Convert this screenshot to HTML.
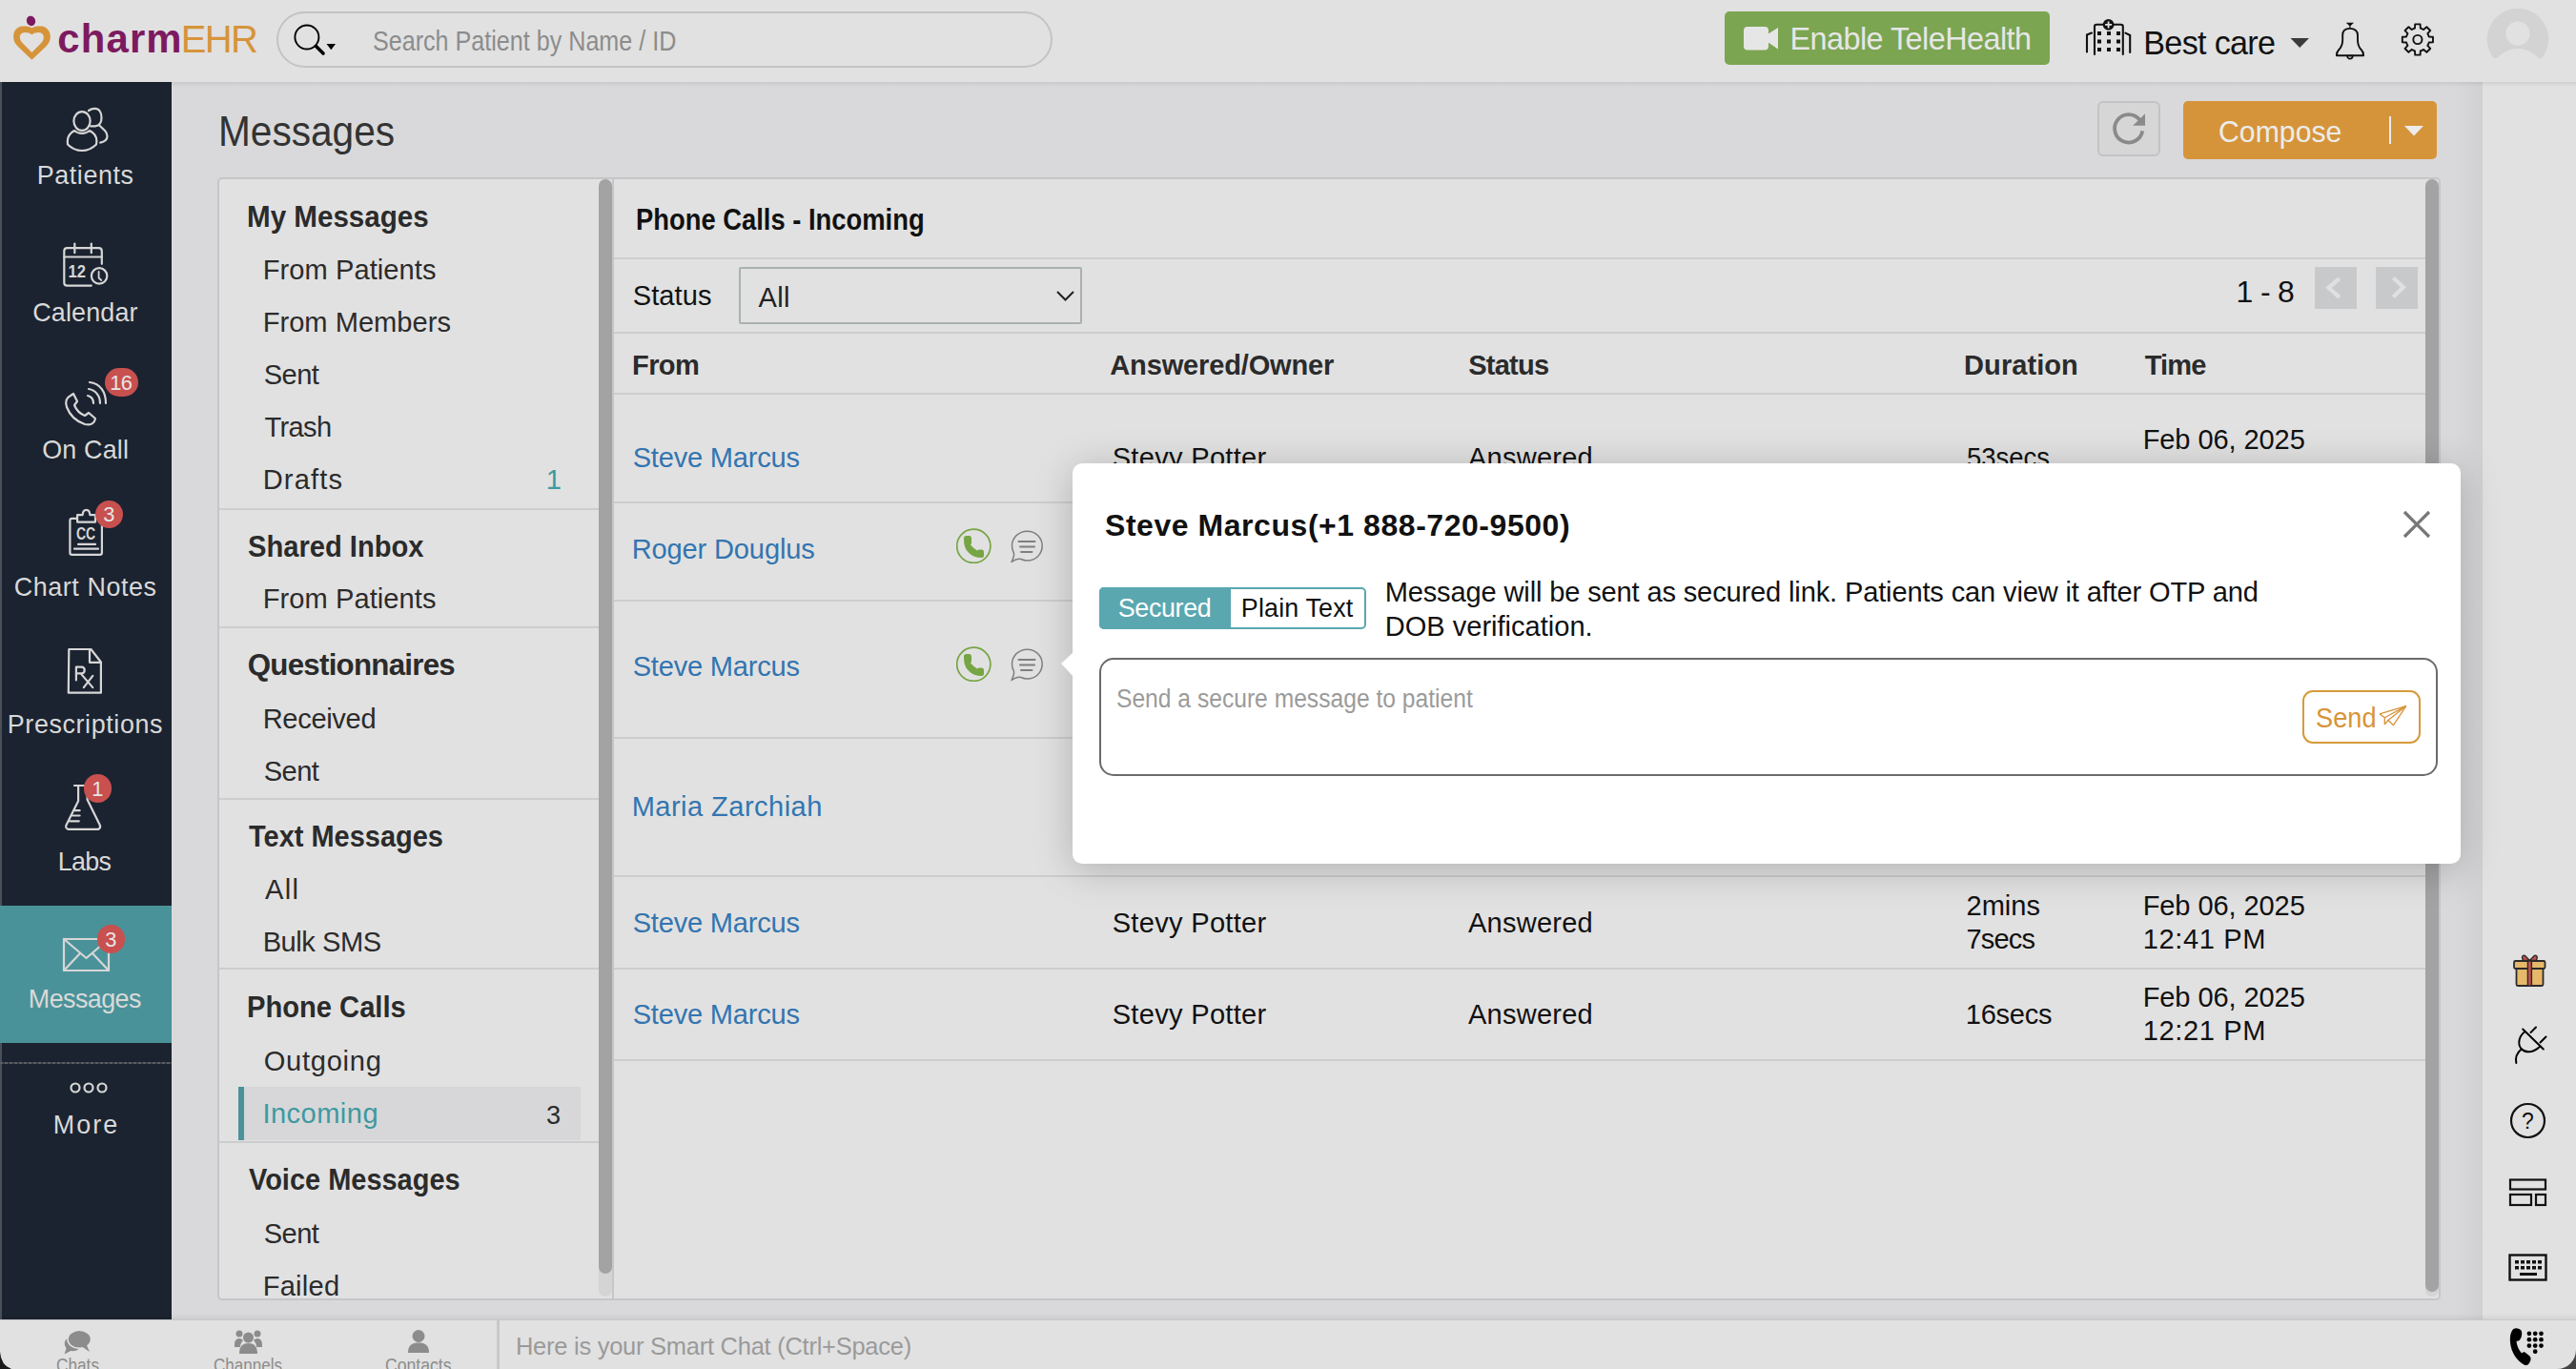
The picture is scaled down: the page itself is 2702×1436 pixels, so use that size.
<!DOCTYPE html><html><head><meta charset="utf-8"><style>
html,body{margin:0;padding:0;}
body{width:2702px;height:1436px;overflow:hidden;position:relative;background:#d9d9db;font-family:"Liberation Sans", sans-serif;}
</style></head><body>

<div style="position:absolute;left:0px;top:0px;width:2702px;height:86px;background:#e1e1e1;"></div>
<div style="position:absolute;left:0px;top:86px;width:180px;height:1298px;background:#1b2330;"></div>
<div style="position:absolute;left:0px;top:86px;width:2px;height:1298px;background:#4b5058;"></div>
<div style="position:absolute;left:0px;top:950px;width:180px;height:144px;background:#4a9299;"></div>
<div style="position:absolute;left:0px;top:1114px;width:180px;height:2px;background:repeating-linear-gradient(90deg,#5a5e64 0 3px,#3a3e45 3px 5px);"></div>
<div style="position:absolute;left:2573px;top:86px;width:31px;height:1298px;background:linear-gradient(90deg,rgba(0,0,0,0),rgba(0,0,0,0.04));"></div>
<div style="position:absolute;left:2604px;top:86px;width:98px;height:1298px;background:#e1e1e1;"></div>
<div style="position:absolute;left:0px;top:86px;width:2702px;height:5px;background:linear-gradient(rgba(0,0,0,0.075),rgba(0,0,0,0));"></div>
<div style="position:absolute;left:228px;top:186px;width:2332px;height:1178px;background:#e1e1e1;border:2px solid #c5c6c8;border-radius:5px;box-sizing:border-box;"></div>
<div style="position:absolute;left:642px;top:187px;width:2px;height:1176px;background:#c5c6c8;"></div>
<div style="position:absolute;left:628px;top:188px;width:14px;height:1172px;background:#d4d4d4;border-radius:7px;"></div>
<div style="position:absolute;left:628px;top:188px;width:14px;height:1148px;background:#a3a3a3;border-radius:7px;"></div>
<div style="position:absolute;left:2544px;top:188px;width:14px;height:1172px;background:#d4d4d4;border-radius:7px;"></div>
<div style="position:absolute;left:2544px;top:188px;width:14px;height:1167px;background:#a3a3a3;border-radius:7px;"></div>
<div id="t0" style="position:absolute;left:228.76px;top:114.50px;font-size:45.06px;line-height:45.06px;font-weight:400;color:#333333;white-space:nowrap;letter-spacing:0.000px;transform:scaleX(0.9015);transform-origin:0 0;">Messages</div>
<div style="position:absolute;left:230px;top:533px;width:398px;height:2px;background:#cdcdcd;"></div>
<div style="position:absolute;left:230px;top:657px;width:398px;height:2px;background:#cdcdcd;"></div>
<div style="position:absolute;left:230px;top:837px;width:398px;height:2px;background:#cdcdcd;"></div>
<div style="position:absolute;left:230px;top:1015px;width:398px;height:2px;background:#cdcdcd;"></div>
<div style="position:absolute;left:230px;top:1197px;width:398px;height:2px;background:#cdcdcd;"></div>
<div id="t1" style="position:absolute;left:259.08px;top:212.24px;font-size:31.25px;line-height:31.25px;font-weight:700;color:#2b2b2b;white-space:nowrap;letter-spacing:0.000px;transform:scaleX(0.9464);transform-origin:0 0;">My Messages</div>
<div id="t2" style="position:absolute;left:260.12px;top:557.74px;font-size:31.25px;line-height:31.25px;font-weight:700;color:#2b2b2b;white-space:nowrap;letter-spacing:0.000px;transform:scaleX(0.9321);transform-origin:0 0;">Shared Inbox</div>
<div id="t3" style="position:absolute;left:259.75px;top:682.24px;font-size:31.25px;line-height:31.25px;font-weight:700;color:#2b2b2b;white-space:nowrap;letter-spacing:-0.731px;">Questionnaires</div>
<div id="t4" style="position:absolute;left:260.71px;top:862.49px;font-size:31.25px;line-height:31.25px;font-weight:700;color:#2b2b2b;white-space:nowrap;letter-spacing:0.000px;transform:scaleX(0.9270);transform-origin:0 0;">Text Messages</div>
<div id="t5" style="position:absolute;left:259.11px;top:1041.24px;font-size:31.25px;line-height:31.25px;font-weight:700;color:#2b2b2b;white-space:nowrap;letter-spacing:0.000px;transform:scaleX(0.9323);transform-origin:0 0;">Phone Calls</div>
<div id="t6" style="position:absolute;left:260.85px;top:1221.74px;font-size:31.25px;line-height:31.25px;font-weight:700;color:#2b2b2b;white-space:nowrap;letter-spacing:0.000px;transform:scaleX(0.9268);transform-origin:0 0;">Voice Messages</div>
<div style="position:absolute;left:250px;top:1140px;width:359px;height:56px;background:#d7d7d9;"></div>
<div style="position:absolute;left:250px;top:1140px;width:6px;height:56px;background:#4a9299;"></div>
<div id="t7" style="position:absolute;left:275.67px;top:269.09px;font-size:29.07px;line-height:29.07px;font-weight:400;color:#2b2b2b;white-space:nowrap;letter-spacing:0.078px;">From Patients</div>
<div id="t8" style="position:absolute;left:275.67px;top:324.09px;font-size:29.07px;line-height:29.07px;font-weight:400;color:#2b2b2b;white-space:nowrap;letter-spacing:0.027px;">From Members</div>
<div id="t9" style="position:absolute;left:276.69px;top:379.09px;font-size:29.07px;line-height:29.07px;font-weight:400;color:#2b2b2b;white-space:nowrap;letter-spacing:-0.510px;">Sent</div>
<div id="t10" style="position:absolute;left:277.42px;top:434.09px;font-size:29.07px;line-height:29.07px;font-weight:400;color:#2b2b2b;white-space:nowrap;letter-spacing:-0.631px;">Trash</div>
<div id="t11" style="position:absolute;left:275.67px;top:489.09px;font-size:29.07px;line-height:29.07px;font-weight:400;color:#2b2b2b;white-space:nowrap;letter-spacing:1.177px;">Drafts</div>
<div id="t12" style="position:absolute;left:275.67px;top:614.09px;font-size:29.07px;line-height:29.07px;font-weight:400;color:#2b2b2b;white-space:nowrap;letter-spacing:0.078px;">From Patients</div>
<div id="t13" style="position:absolute;left:275.67px;top:740.09px;font-size:29.07px;line-height:29.07px;font-weight:400;color:#2b2b2b;white-space:nowrap;letter-spacing:-0.319px;">Received</div>
<div id="t14" style="position:absolute;left:276.69px;top:795.09px;font-size:29.07px;line-height:29.07px;font-weight:400;color:#2b2b2b;white-space:nowrap;letter-spacing:-0.510px;">Sent</div>
<div id="t15" style="position:absolute;left:278.0px;top:919.34px;font-size:29.07px;line-height:29.07px;font-weight:400;color:#2b2b2b;white-space:nowrap;letter-spacing:1.309px;">All</div>
<div id="t16" style="position:absolute;left:275.67px;top:973.84px;font-size:29.07px;line-height:29.07px;font-weight:400;color:#2b2b2b;white-space:nowrap;letter-spacing:-0.457px;">Bulk SMS</div>
<div id="t17" style="position:absolute;left:276.69px;top:1099.34px;font-size:29.07px;line-height:29.07px;font-weight:400;color:#2b2b2b;white-space:nowrap;letter-spacing:0.744px;">Outgoing</div>
<div id="t18" style="position:absolute;left:276.69px;top:1280.09px;font-size:29.07px;line-height:29.07px;font-weight:400;color:#2b2b2b;white-space:nowrap;letter-spacing:-0.510px;">Sent</div>
<div id="t19" style="position:absolute;left:275.67px;top:1335.09px;font-size:29.07px;line-height:29.07px;font-weight:400;color:#2b2b2b;white-space:nowrap;letter-spacing:0.255px;">Failed</div>
<div id="t20" style="position:absolute;left:275.38px;top:1154.09px;font-size:29.07px;line-height:29.07px;font-weight:400;color:#3e99a0;white-space:nowrap;letter-spacing:0.464px;">Incoming</div>
<div id="t21" style="position:absolute;left:572.82px;top:489.09px;font-size:29.07px;line-height:29.07px;font-weight:400;color:#3e99a0;white-space:nowrap;letter-spacing:0.000px;">1</div>
<div id="t22" style="position:absolute;left:572.91px;top:1155.70px;font-size:27.18px;line-height:27.18px;font-weight:400;color:#2b2b2b;white-space:nowrap;letter-spacing:0.000px;">3</div>
<div id="t23" style="position:absolute;left:667.22px;top:214.86px;font-size:30.52px;line-height:30.52px;font-weight:700;color:#111111;white-space:nowrap;letter-spacing:0.000px;transform:scaleX(0.8969);transform-origin:0 0;">Phone Calls - Incoming</div>
<div style="position:absolute;left:644px;top:270px;width:1900px;height:2px;background:#cdcdcd;"></div>
<div id="t24" style="position:absolute;left:663.69px;top:296.09px;font-size:29.07px;line-height:29.07px;font-weight:400;color:#111111;white-space:nowrap;letter-spacing:0.084px;">Status</div>
<div style="position:absolute;left:775px;top:280px;width:360px;height:60px;border:2px solid #aab1b1;border-radius:2px;box-sizing:border-box;"></div>
<div id="t25" style="position:absolute;left:795.5px;top:298.09px;font-size:29.07px;line-height:29.07px;font-weight:400;color:#222;white-space:nowrap;letter-spacing:0.309px;">All</div>
<svg style="position:absolute;left:1107px;top:304px;" width="21" height="14" viewBox="0 0 21 14"><polyline points="2,2 10.5,10.5 19,2" fill="none" stroke="#222" stroke-width="2"/></svg>
<div style="position:absolute;left:644px;top:348px;width:1900px;height:2px;background:#cdcdcd;"></div>
<div id="t26" style="position:absolute;left:2345.6px;top:289.62px;font-size:31.98px;line-height:31.98px;font-weight:400;color:#111111;white-space:nowrap;letter-spacing:-0.690px;">1 - 8</div>
<div style="position:absolute;left:2428px;top:280px;width:44px;height:44px;background:#c8c9ca;"></div>
<div style="position:absolute;left:2492px;top:280px;width:44px;height:44px;background:#c8c9ca;"></div>
<svg style="position:absolute;left:2428px;top:280px;" width="44" height="44" viewBox="0 0 44 44"><polyline points="25.9,12.2 14.5,21.8 25.9,31.9" fill="none" stroke="#e0e0e0" stroke-width="4.3"/></svg>
<svg style="position:absolute;left:2492px;top:280px;" width="44" height="44" viewBox="0 0 44 44"><polyline points="18.3,11.5 29,21.2 18.3,31.5" fill="none" stroke="#e0e0e0" stroke-width="4.3"/></svg>
<div id="t27" style="position:absolute;left:663.11px;top:368.59px;font-size:29.07px;line-height:29.07px;font-weight:700;color:#2b2b2b;white-space:nowrap;letter-spacing:-0.674px;">From</div>
<div id="t28" style="position:absolute;left:1164.27px;top:368.59px;font-size:29.07px;line-height:29.07px;font-weight:700;color:#2b2b2b;white-space:nowrap;letter-spacing:-0.176px;">Answered/Owner</div>
<div id="t29" style="position:absolute;left:1540.13px;top:368.59px;font-size:29.07px;line-height:29.07px;font-weight:700;color:#2b2b2b;white-space:nowrap;letter-spacing:-0.751px;">Status</div>
<div id="t30" style="position:absolute;left:2060.11px;top:368.59px;font-size:29.07px;line-height:29.07px;font-weight:700;color:#2b2b2b;white-space:nowrap;letter-spacing:0.025px;">Duration</div>
<div id="t31" style="position:absolute;left:2249.71px;top:368.59px;font-size:29.07px;line-height:29.07px;font-weight:700;color:#2b2b2b;white-space:nowrap;letter-spacing:-0.826px;">Time</div>
<div style="position:absolute;left:644px;top:412px;width:1900px;height:2px;background:#cdcdcd;"></div>
<div style="position:absolute;left:644px;top:526px;width:1900px;height:2px;background:#cdcdcd;"></div>
<div style="position:absolute;left:644px;top:629px;width:1900px;height:2px;background:#cdcdcd;"></div>
<div style="position:absolute;left:644px;top:773px;width:1900px;height:2px;background:#cdcdcd;"></div>
<div style="position:absolute;left:644px;top:918px;width:1900px;height:2px;background:#cdcdcd;"></div>
<div style="position:absolute;left:644px;top:1015px;width:1900px;height:2px;background:#cdcdcd;"></div>
<div style="position:absolute;left:644px;top:1111px;width:1900px;height:2px;background:#cdcdcd;"></div>
<div id="t32" style="position:absolute;left:663.69px;top:466.09px;font-size:29.07px;line-height:29.07px;font-weight:400;color:#3375b0;white-space:nowrap;letter-spacing:-0.217px;">Steve Marcus</div>
<div id="t33" style="position:absolute;left:1166.69px;top:466.09px;font-size:29.07px;line-height:29.07px;font-weight:400;color:#111111;white-space:nowrap;letter-spacing:0.294px;">Stevy Potter</div>
<div id="t34" style="position:absolute;left:1540.0px;top:466.09px;font-size:29.07px;line-height:29.07px;font-weight:400;color:#111111;white-space:nowrap;letter-spacing:0.207px;">Answered</div>
<div id="t35" style="position:absolute;left:2062.9px;top:466.09px;font-size:29.07px;line-height:29.07px;font-weight:400;color:#111111;white-space:nowrap;letter-spacing:0.000px;transform:scaleX(0.9449);transform-origin:0 0;">53secs</div>
<div id="t36" style="position:absolute;left:2247.67px;top:447.09px;font-size:29.07px;line-height:29.07px;font-weight:400;color:#111111;white-space:nowrap;letter-spacing:-0.100px;">Feb 06, 2025</div>
<div id="t37" style="position:absolute;left:662.67px;top:562.09px;font-size:29.07px;line-height:29.07px;font-weight:400;color:#3375b0;white-space:nowrap;letter-spacing:-0.146px;">Roger Douglus</div>
<div id="t38" style="position:absolute;left:663.69px;top:685.34px;font-size:29.07px;line-height:29.07px;font-weight:400;color:#3375b0;white-space:nowrap;letter-spacing:-0.217px;">Steve Marcus</div>
<div id="t39" style="position:absolute;left:662.67px;top:832.34px;font-size:29.07px;line-height:29.07px;font-weight:400;color:#3375b0;white-space:nowrap;letter-spacing:0.451px;">Maria Zarchiah</div>
<div id="t40" style="position:absolute;left:663.69px;top:953.59px;font-size:29.07px;line-height:29.07px;font-weight:400;color:#3375b0;white-space:nowrap;letter-spacing:-0.217px;">Steve Marcus</div>
<div id="t41" style="position:absolute;left:1166.69px;top:954.09px;font-size:29.07px;line-height:29.07px;font-weight:400;color:#111111;white-space:nowrap;letter-spacing:0.294px;">Stevy Potter</div>
<div id="t42" style="position:absolute;left:1540.0px;top:954.09px;font-size:29.07px;line-height:29.07px;font-weight:400;color:#111111;white-space:nowrap;letter-spacing:0.207px;">Answered</div>
<div id="t43" style="position:absolute;left:2062.55px;top:935.59px;font-size:29.07px;line-height:29.07px;font-weight:400;color:#111111;white-space:nowrap;letter-spacing:-0.033px;">2mins</div>
<div id="t44" style="position:absolute;left:2062.55px;top:970.59px;font-size:29.07px;line-height:29.07px;font-weight:400;color:#111111;white-space:nowrap;letter-spacing:-0.846px;">7secs</div>
<div id="t45" style="position:absolute;left:2247.67px;top:935.59px;font-size:29.07px;line-height:29.07px;font-weight:400;color:#111111;white-space:nowrap;letter-spacing:-0.100px;">Feb 06, 2025</div>
<div id="t46" style="position:absolute;left:2247.82px;top:970.59px;font-size:29.07px;line-height:29.07px;font-weight:400;color:#111111;white-space:nowrap;letter-spacing:0.608px;">12:41 PM</div>
<div id="t47" style="position:absolute;left:663.69px;top:1049.84px;font-size:29.07px;line-height:29.07px;font-weight:400;color:#3375b0;white-space:nowrap;letter-spacing:-0.217px;">Steve Marcus</div>
<div id="t48" style="position:absolute;left:1166.69px;top:1050.09px;font-size:29.07px;line-height:29.07px;font-weight:400;color:#111111;white-space:nowrap;letter-spacing:0.294px;">Stevy Potter</div>
<div id="t49" style="position:absolute;left:1540.0px;top:1050.09px;font-size:29.07px;line-height:29.07px;font-weight:400;color:#111111;white-space:nowrap;letter-spacing:0.207px;">Answered</div>
<div id="t50" style="position:absolute;left:2061.82px;top:1050.09px;font-size:29.07px;line-height:29.07px;font-weight:400;color:#111111;white-space:nowrap;letter-spacing:-0.288px;">16secs</div>
<div id="t51" style="position:absolute;left:2247.67px;top:1032.09px;font-size:29.07px;line-height:29.07px;font-weight:400;color:#111111;white-space:nowrap;letter-spacing:-0.100px;">Feb 06, 2025</div>
<div id="t52" style="position:absolute;left:2247.82px;top:1067.09px;font-size:29.07px;line-height:29.07px;font-weight:400;color:#111111;white-space:nowrap;letter-spacing:0.608px;">12:21 PM</div>
<svg style="position:absolute;left:50px;top:100px;" width="80" height="70" viewBox="50 100 80 70"><g fill="none" stroke="#d6d6d6" stroke-width="2.2" stroke-linecap="round" stroke-linejoin="round"><path d="M93,116 C95,114.5 97.5,113.8 99.5,113.8 C104,113.8 106.5,118 106.5,123.5 C106.5,128.5 104,131.8 100,132.3 L95,132.3"/><path d="M104.2,131.5 L110,137 C112,139 112.5,141 112.5,143 C112.5,146 110,148.5 105.2,149.6"/><ellipse cx="86" cy="127" rx="8.6" ry="9.9" fill="#1b2330"/><path d="M78,137 C73.5,139.5 70.8,143.5 70.8,148 L71,151.5 C75,155.5 80,158 86,158 C92,158 97,155.5 101,151.5 L101.4,148 C101.4,143.5 99,139.5 94,137 C92,138.8 89,139.8 86,139.8 C83,139.8 80,138.8 78,137 Z" fill="#1b2330"/></g></svg>
<svg style="position:absolute;left:55px;top:245px;" width="70" height="65" viewBox="55 245 70 65"><g fill="none" stroke="#d6d6d6" stroke-width="2.2" stroke-linecap="round" stroke-linejoin="round"><path d="M95.8,299.6 H70.5 Q67.3,299.6 67.3,296.4 V263.4 Q67.3,260.2 70.5,260.2 H103.6 Q106.8,260.2 106.8,263.4 V276.8"/><line x1="67.3" y1="269.5" x2="106.8" y2="269.5"/><line x1="78.3" y1="255.6" x2="78.3" y2="265.2"/><line x1="95.8" y1="255.6" x2="95.8" y2="265.2"/><circle cx="104.1" cy="289.4" r="8.2"/><path d="M103.6,285 V291.5 L106.3,294" stroke-width="1.8"/></g><text x="71.5" y="290.8" font-family="Liberation Sans" font-size="17.5" font-weight="bold" fill="#d6d6d6" textLength="18.5" lengthAdjust="spacingAndGlyphs">12</text></svg>
<svg style="position:absolute;left:60px;top:395px;" width="60" height="55" viewBox="0 0 60 55"><g fill="none" stroke="#d6d6d6" stroke-width="2.2" stroke-linecap="round" stroke-linejoin="round"><path d="M14,20 C10,22 8,26 10,32 C13,40 20,47 29,50 C33,51 37,50 39,47 L40,44 L33,38 L29,41 C24,39 20,35 18,30 L21,26 L17,18 Z"/><path d="M32,20 C36,21 38,24 38,28"/><path d="M33,13 C40,14 45,20 45,28"/><path d="M34,6 C45,7 51,16 51,28"/></g></svg>
<svg style="position:absolute;left:55px;top:520px;" width="80" height="70" viewBox="55 520 80 70"><g fill="none" stroke="#d6d6d6" stroke-width="2.2" stroke-linecap="round" stroke-linejoin="round"><path d="M81.1,543.8 H75.6 Q73.4,543.8 73.4,546 V579.7 Q73.4,581.9 75.6,581.9 H104.7 Q106.9,581.9 106.9,579.7 V546 Q106.9,543.8 104.7,543.8 H100"/><path d="M81.1,547.6 V540.2 H86.6 Q87,534.8 90.5,534.8 Q94,534.8 94.4,540.2 H100 V547.6 Z"/><line x1="82.1" y1="570.9" x2="100" y2="570.9"/><line x1="78" y1="575.7" x2="103" y2="575.7"/></g><text x="80" y="565.8" font-family="Liberation Sans" font-size="18.5" font-weight="bold" fill="#d6d6d6" textLength="20.2" lengthAdjust="spacingAndGlyphs">CC</text></svg>
<svg style="position:absolute;left:55px;top:670px;" width="80" height="70" viewBox="55 670 80 70"><g fill="none" stroke="#d6d6d6" stroke-width="2.2" stroke-linecap="round" stroke-linejoin="round"><path d="M72.3,681 H95.4 L105.9,694.5 V726.7 H71.8 Z"/><path d="M94,681.5 V694.8 H105.5"/><path d="M79.9,713.5 V699.7 H85.3 Q88.7,699.7 88.7,703.1 Q88.7,706.4 85.3,706.4 H79.9 M84.8,706.6 L97.3,721.1 M87.8,721.1 L97.3,708.9"/></g></svg>
<svg style="position:absolute;left:55px;top:805px;" width="80" height="70" viewBox="55 805 80 70"><g fill="none" stroke="#d6d6d6" stroke-width="2.2" stroke-linecap="round" stroke-linejoin="round"><path d="M78,824 H91.6"/><path d="M82.1,824 V840.3 L69.5,865.5 Q68.2,868.5 71.5,869.9 H103 Q106,868.5 104.8,865.5 L91.6,838.7 V824"/><line x1="78.6" y1="850.2" x2="83.6" y2="850.2"/><line x1="76" y1="855.5" x2="83.6" y2="855.5"/><line x1="73" y1="861.3" x2="82.8" y2="861.3"/></g></svg>
<svg style="position:absolute;left:60px;top:978px;" width="60" height="47" viewBox="0 0 60 47"><g fill="none" stroke="#d6d6d6" stroke-width="2.2" stroke-linecap="round" stroke-linejoin="round"><rect x="7" y="7" width="47" height="33"/><path d="M7,7 L30.5,27 L54,7 M7,40 L24,22 M54,40 L37,22"/></g></svg>
<svg style="position:absolute;left:70px;top:1130px;" width="48" height="22" viewBox="0 0 48 22"><g fill="none" stroke="#d6d6d6" stroke-width="2.2" stroke-linecap="round" stroke-linejoin="round"><circle cx="9" cy="11" r="4.5"/><circle cx="23" cy="11" r="4.5"/><circle cx="37" cy="11" r="4.5"/></g></svg>
<div id="t53" style="position:absolute;left:38.85px;top:171.44px;font-size:26.89px;line-height:26.89px;font-weight:400;color:#d9d9d9;white-space:nowrap;letter-spacing:0.563px;">Patients</div>
<div id="t54" style="position:absolute;left:34.16px;top:314.94px;font-size:26.89px;line-height:26.89px;font-weight:400;color:#d9d9d9;white-space:nowrap;letter-spacing:0.182px;">Calendar</div>
<div id="t55" style="position:absolute;left:44.29px;top:458.94px;font-size:26.89px;line-height:26.89px;font-weight:400;color:#d9d9d9;white-space:nowrap;letter-spacing:0.159px;">On Call</div>
<div id="t56" style="position:absolute;left:14.66px;top:602.94px;font-size:26.89px;line-height:26.89px;font-weight:400;color:#d9d9d9;white-space:nowrap;letter-spacing:0.591px;">Chart Notes</div>
<div id="t57" style="position:absolute;left:7.85px;top:746.94px;font-size:26.89px;line-height:26.89px;font-weight:400;color:#d9d9d9;white-space:nowrap;letter-spacing:0.604px;">Prescriptions</div>
<div id="t58" style="position:absolute;left:60.85px;top:890.94px;font-size:26.89px;line-height:26.89px;font-weight:400;color:#d9d9d9;white-space:nowrap;letter-spacing:-0.743px;">Labs</div>
<div id="t59" style="position:absolute;left:29.85px;top:1034.94px;font-size:26.89px;line-height:26.89px;font-weight:400;color:#d9d9d9;white-space:nowrap;letter-spacing:-0.567px;">Messages</div>
<div id="t60" style="position:absolute;left:55.85px;top:1166.94px;font-size:26.89px;line-height:26.89px;font-weight:400;color:#d9d9d9;white-space:nowrap;letter-spacing:2.073px;">More</div>
<div style="position:absolute;left:110px;top:386px;width:35px;height:30px;background:#c8504f;border-radius:15px;"></div>
<div id="t61" style="position:absolute;left:115.36px;top:390.77px;font-size:21.80px;line-height:21.80px;font-weight:400;color:#e6e6e6;white-space:nowrap;letter-spacing:-0.692px;">16</div>
<div style="position:absolute;left:100px;top:525px;width:29px;height:29px;background:#c8504f;border-radius:15px;"></div>
<div id="t62" style="position:absolute;left:108.13px;top:529.27px;font-size:21.80px;line-height:21.80px;font-weight:400;color:#e6e6e6;white-space:nowrap;letter-spacing:0.000px;">3</div>
<div style="position:absolute;left:88px;top:812px;width:29px;height:30px;background:#c8504f;border-radius:15px;"></div>
<div id="t63" style="position:absolute;left:96.36px;top:816.77px;font-size:21.80px;line-height:21.80px;font-weight:400;color:#e6e6e6;white-space:nowrap;letter-spacing:0.000px;">1</div>
<div style="position:absolute;left:102px;top:970px;width:29px;height:30px;background:#c8504f;border-radius:15px;"></div>
<div id="t64" style="position:absolute;left:110.13px;top:974.77px;font-size:21.80px;line-height:21.80px;font-weight:400;color:#e6e6e6;white-space:nowrap;letter-spacing:0.000px;">3</div>
<svg style="position:absolute;left:8px;top:10px;" width="50" height="56" viewBox="8 10 50 56"><ellipse cx="32.5" cy="21.9" rx="4.6" ry="5.3" transform="rotate(-15 32.5 21.9)" fill="#7d1a5f"/><path fill-rule="evenodd" fill="#d6943a" d="M33.4,29.2 C31,27.5 27,27.2 23,27.6 C17,28.5 14.1,33 14.1,38.5 C14.1,43 16,46 19.5,49.5 L33.4,62.8 L47.5,49.5 C51,46 52.8,43 52.8,38.5 C52.8,33 49.5,28.5 44,27.6 C40,27.2 36,27.5 33.4,29.2 Z M33.4,36.6 C31.5,34.8 29,34.1 26,34.1 C22.5,34.2 20.9,36.5 20.9,39.5 C20.9,41.5 22,43.5 24,45.5 L33.4,55 L42.8,45.5 C44.8,43.5 45.8,41.5 45.8,39.5 C45.8,36.5 44,34.2 40.5,34.1 C37.8,34.1 35.3,34.8 33.4,36.6 Z"/></svg>
<div id="t65" style="position:absolute;left:60.33px;top:20.22px;font-size:41.86px;line-height:41.86px;font-weight:700;color:#7d1a5f;white-space:nowrap;letter-spacing:1.152px;">charm</div>
<div id="t66" style="position:absolute;left:189.8px;top:21.82px;font-size:39.97px;line-height:39.97px;font-weight:400;color:#d6943a;white-space:nowrap;letter-spacing:-1.669px;">EHR</div>
<div style="position:absolute;left:290px;top:12px;width:814px;height:59px;border:2px solid #c3c3c3;border-radius:30px;box-sizing:border-box;"></div>
<svg style="position:absolute;left:300px;top:20px;" width="60" height="42" viewBox="0 0 60 42"><circle cx="21.9" cy="19" r="12.5" fill="none" stroke="#000" stroke-width="1.9"/><line x1="31.5" y1="28.5" x2="39" y2="36" stroke="#000" stroke-width="3.6" stroke-linecap="round"/><polygon points="42.5,26 52,26 47.3,32.3" fill="#000"/></svg>
<div id="t67" style="position:absolute;left:391.37px;top:28.59px;font-size:29.07px;line-height:29.07px;font-weight:400;color:#8c8c8c;white-space:nowrap;letter-spacing:0.000px;transform:scaleX(0.8643);transform-origin:0 0;">Search Patient by Name / ID</div>
<div style="position:absolute;left:1809px;top:12px;width:341px;height:56px;background:#7ba551;border-radius:5px;"></div>
<svg style="position:absolute;left:1827px;top:26px;" width="40" height="28" viewBox="0 0 40 28"><rect x="2" y="2" width="26" height="24.5" rx="4" fill="#e6e6e6"/><polygon points="27,10 38,3 38,25.5 27,18" fill="#e6e6e6"/></svg>
<div id="t68" style="position:absolute;left:1877.41px;top:25.25px;font-size:32.41px;line-height:32.41px;font-weight:400;color:#e6e6e6;white-space:nowrap;letter-spacing:-0.549px;">Enable TeleHealth</div>
<svg style="position:absolute;left:2180px;top:10px;" width="65" height="56" viewBox="2180 10 65 56"><g fill="none" stroke="#111" stroke-width="2.1" stroke-linecap="round"><path d="M2197,57 V28 Q2197,25.8 2199.2,25.8 H2224.6 Q2226.8,25.8 2226.8,28 V57"/><path d="M2194,34.6 L2189,36.4 V54.5 M2229.4,34.6 L2234.2,37 V55"/></g><circle cx="2211.6" cy="25.9" r="5.9" fill="#111"/><path d="M2211.6,22.4 V29.4 M2208.1,25.9 H2215.1" stroke="#e1e1e1" stroke-width="1.8"/><g fill="#111"><rect x="2200" y="33" width="4" height="4"/><rect x="2210" y="33" width="4" height="4"/><rect x="2220" y="33" width="4" height="4"/><rect x="2200" y="41.5" width="4" height="4"/><rect x="2210" y="41.5" width="4" height="4"/><rect x="2220" y="41.5" width="4" height="4"/><rect x="2200" y="50" width="4" height="4"/><rect x="2210" y="50" width="4" height="4"/><rect x="2220" y="50" width="4" height="4"/></g></svg>
<div id="t69" style="position:absolute;left:2248.27px;top:27.77px;font-size:34.16px;line-height:34.16px;font-weight:400;color:#111111;white-space:nowrap;letter-spacing:-0.692px;">Best care</div>
<svg style="position:absolute;left:2400px;top:38px;" width="24" height="14" viewBox="0 0 24 14"><polygon points="2.5,2 22,2 12.25,12" fill="#3a3a3a"/></svg>
<svg style="position:absolute;left:2440px;top:14px;" width="50" height="56" viewBox="2440 14 50 56"><path d="M2464.8,29.9 C2460,29.9 2457.2,32.5 2457.2,37 V42 C2457.2,47 2455.5,50 2453,52.5 C2451.5,54 2450.9,55.5 2450.9,58.2 H2479.1 C2479.1,55.5 2478.5,54 2477,52.5 C2474.5,50 2473,47 2473,42 V37 C2473,32.5 2470,29.9 2464.8,29.9 Z" fill="none" stroke="#111" stroke-width="1.9" stroke-linejoin="round"/><path d="M2462.2,24.3 H2467.6 L2464.9,27 Z M2464.9,26 V30" fill="#111" stroke="#111" stroke-width="1.2"/><path d="M2462,58.5 A2.9,3.2 0 0 0 2467.8,58.5 Z" fill="none" stroke="#111" stroke-width="1.7"/></svg>
<svg style="position:absolute;left:2510px;top:14px;" width="52" height="56" viewBox="2510 14 52 56"><path d="M2531.23,30.23 L2532.95,29.66 L2533.21,25.42 L2538.59,25.42 L2538.85,29.66 L2540.57,30.23 L2542.18,31.04 L2545.37,28.23 L2549.17,32.03 L2546.36,35.22 L2547.17,36.83 L2547.74,38.55 L2551.98,38.81 L2551.98,44.19 L2547.74,44.45 L2547.17,46.17 L2546.36,47.78 L2549.17,50.97 L2545.37,54.77 L2542.18,51.96 L2540.57,52.77 L2538.85,53.34 L2538.59,57.58 L2533.21,57.58 L2532.95,53.34 L2531.23,52.77 L2529.62,51.96 L2526.43,54.77 L2522.63,50.97 L2525.44,47.78 L2524.63,46.17 L2524.06,44.45 L2519.82,44.19 L2519.82,38.81 L2524.06,38.55 L2524.63,36.83 L2525.44,35.22 L2522.63,32.03 L2526.43,28.23 L2529.62,31.04 Z" fill="none" stroke="#111" stroke-width="1.9" stroke-linejoin="round"/><circle cx="2535.9" cy="41.5" r="4.6" fill="none" stroke="#111" stroke-width="1.9"/></svg>
<svg style="position:absolute;left:2606px;top:6px;" width="70" height="66" viewBox="0 0 70 66"><defs><clipPath id="av"><circle cx="35" cy="35" r="32.3"/></clipPath></defs><circle cx="35" cy="35" r="32.3" fill="#d3d3d3"/><g clip-path="url(#av)" fill="#e1e1e1"><circle cx="35" cy="29.2" r="12.6"/><ellipse cx="35" cy="70" rx="27" ry="25"/></g><rect x="0" y="55" width="70" height="17" fill="#e1e1e1"/></svg>
<div style="position:absolute;left:2200px;top:106px;width:66px;height:58px;background:#d6d6d7;border:2px solid #c3c3c4;border-radius:6px;box-sizing:border-box;"></div>
<svg style="position:absolute;left:2213px;top:116px;" width="40" height="40" viewBox="0 0 40 40"><path d="M34.28,21.35 A14.7,14.7 0 1 1 31.22,9.55" fill="none" stroke="#8a8a8a" stroke-width="3.8"/><polygon points="37,3.2 37,15.7 24.2,15.7" fill="#8a8a8a"/></svg>
<div style="position:absolute;left:2290px;top:106px;width:266px;height:61px;background:#d6943a;border-radius:5px;"></div>
<div id="t70" style="position:absolute;left:2327.49px;top:121.62px;font-size:31.98px;line-height:31.98px;font-weight:400;color:#ececec;white-space:nowrap;letter-spacing:0.000px;transform:scaleX(0.9455);transform-origin:0 0;">Compose</div>
<div style="position:absolute;left:2506px;top:122px;width:2px;height:29px;background:#ececec;"></div>
<svg style="position:absolute;left:2520px;top:130px;" width="24" height="15" viewBox="0 0 24 15"><polygon points="2,2 22,2 12,12.5" fill="#ececec"/></svg>
<svg style="position:absolute;left:1003px;top:554px;" width="37" height="37" viewBox="0 0 37 37"><circle cx="18.3" cy="18.8" r="17.6" fill="none" stroke="#76a544" stroke-width="1.7"/><path d="M10.5,8 L13.5,8 Q16,8 16,10.5 L16,15 Q16,16.5 15,17.5 Q18,21 22,23.5 Q23,22.5 24.5,22.5 L27,22.5 Q29,22.5 29,25 L29,28.5 Q29,31 26.5,31 Q17,31 11.5,24 Q8,19.5 8,12 L8,10.5 Q8,8 10.5,8 Z" fill="#76a544"/></svg>
<svg style="position:absolute;left:1060px;top:556px;" width="35" height="35" viewBox="0 0 35 35"><path d="M3.5,24.5 C2,21.5 1.5,19 1.5,16.5 C1.5,8 8.5,1.2 17.5,1.2 C26.5,1.2 33.2,8 33.2,16.5 C33.2,25 26.5,32 17.5,32 C15,32 13,31.5 11,30.5 C8,29.5 4,31.5 1,33.5 C2.5,30.5 4,27.5 3.5,24.5 Z" fill="none" stroke="#7f7f7f" stroke-width="1.5" stroke-linejoin="round"/><g stroke="#7f7f7f" stroke-width="2" stroke-linecap="round"><line x1="8.5" y1="12" x2="25.5" y2="12"/><line x1="10" y1="17.5" x2="25" y2="17.5"/><line x1="11" y1="23" x2="22.5" y2="23"/></g></svg>
<svg style="position:absolute;left:1003px;top:678px;" width="37" height="37" viewBox="0 0 37 37"><circle cx="18.3" cy="18.8" r="17.6" fill="none" stroke="#76a544" stroke-width="1.7"/><path d="M10.5,8 L13.5,8 Q16,8 16,10.5 L16,15 Q16,16.5 15,17.5 Q18,21 22,23.5 Q23,22.5 24.5,22.5 L27,22.5 Q29,22.5 29,25 L29,28.5 Q29,31 26.5,31 Q17,31 11.5,24 Q8,19.5 8,12 L8,10.5 Q8,8 10.5,8 Z" fill="#76a544"/></svg>
<svg style="position:absolute;left:1060px;top:680px;" width="35" height="35" viewBox="0 0 35 35"><path d="M3.5,24.5 C2,21.5 1.5,19 1.5,16.5 C1.5,8 8.5,1.2 17.5,1.2 C26.5,1.2 33.2,8 33.2,16.5 C33.2,25 26.5,32 17.5,32 C15,32 13,31.5 11,30.5 C8,29.5 4,31.5 1,33.5 C2.5,30.5 4,27.5 3.5,24.5 Z" fill="none" stroke="#7f7f7f" stroke-width="1.5" stroke-linejoin="round"/><g stroke="#7f7f7f" stroke-width="2" stroke-linecap="round"><line x1="8.5" y1="12" x2="25.5" y2="12"/><line x1="10" y1="17.5" x2="25" y2="17.5"/><line x1="11" y1="23" x2="22.5" y2="23"/></g></svg>
<svg style="position:absolute;left:2630px;top:995px;" width="50" height="45" viewBox="2630 995 50 45"><rect x="2639.5" y="1015" width="28" height="19" rx="1.5" fill="#e6b86a" stroke="#2b2b2b" stroke-width="1.8"/><rect x="2637" y="1008" width="32.5" height="8" rx="1.5" fill="#e6b86a" stroke="#2b2b2b" stroke-width="1.8"/><rect x="2651.4" y="1008" width="4" height="26" fill="#c9524d" stroke="#2b2b2b" stroke-width="1.4"/><path d="M2653.4,1007.5 L2648.5,1002.5 Q2645.5,1001.5 2645.5,1004.5 L2646.5,1007.5 Z M2653.4,1007.5 L2658.3,1002.5 Q2661.3,1001.5 2661.3,1004.5 L2660.3,1007.5 Z" fill="#c9524d" stroke="#2b2b2b" stroke-width="1.4" stroke-linejoin="round"/></svg>
<svg style="position:absolute;left:2630px;top:1070px;" width="50" height="50" viewBox="2630 1070 50 50"><g fill="none" stroke="#000" stroke-width="2" stroke-linecap="round"><path d="M2646.2,1079.5 L2667.8,1100.5"/><path d="M2648.5,1082 C2642,1087 2640.5,1095 2644.5,1100 C2649,1105 2657,1104.5 2664.5,1097.5"/><path d="M2654.5,1083 L2660,1077.5 M2664.5,1093.5 L2670.5,1087.5"/><path d="M2644.2,1101 C2640,1104.5 2638,1108 2639.3,1115"/></g></svg>
<svg style="position:absolute;left:2632px;top:1156px;" width="40" height="40" viewBox="0 0 40 40"><circle cx="19.5" cy="19.5" r="17.5" fill="none" stroke="#111" stroke-width="2.2"/><text x="19.5" y="28" text-anchor="middle" font-family="Liberation Sans" font-size="23" fill="#111">?</text></svg>
<svg style="position:absolute;left:2631px;top:1235px;" width="42" height="32" viewBox="0 0 42 32"><g fill="none" stroke="#111" stroke-width="2.2"><rect x="2" y="2.5" width="37" height="10"/><rect x="2" y="18" width="22" height="11"/><rect x="29" y="18" width="10" height="11"/></g></svg>
<svg style="position:absolute;left:2630px;top:1314px;" width="44" height="32" viewBox="0 0 44 32"><rect x="2.5" y="2.5" width="38" height="26" fill="none" stroke="#111" stroke-width="2.4"/><g fill="#111"><rect x="8" y="8" width="4" height="3.5"/><rect x="14" y="8" width="4" height="3.5"/><rect x="20" y="8" width="4" height="3.5"/><rect x="26" y="8" width="4" height="3.5"/><rect x="32" y="8" width="4" height="3.5"/><rect x="8" y="14" width="4" height="3.5"/><rect x="14" y="14" width="4" height="3.5"/><rect x="20" y="14" width="4" height="3.5"/><rect x="26" y="14" width="4" height="3.5"/><rect x="32" y="14" width="4" height="3.5"/><rect x="13" y="21" width="18" height="3"/></g></svg>
<div style="position:absolute;left:0px;top:1378px;width:2702px;height:6px;background:linear-gradient(rgba(0,0,0,0),rgba(0,0,0,0.06));"></div>
<div style="position:absolute;left:0px;top:1384px;width:2702px;height:52px;background:#e1e1e1;border-top:1px solid #c9c9c9;box-sizing:border-box;"></div>
<div style="position:absolute;left:521px;top:1384px;width:3px;height:52px;background:#c8c8c8;"></div>
<div id="t71" style="position:absolute;left:540.97px;top:1399.93px;font-size:25.44px;line-height:25.44px;font-weight:400;color:#9a9a9a;white-space:nowrap;letter-spacing:-0.235px;">Here is your Smart Chat (Ctrl+Space)</div>
<div id="t72" style="position:absolute;left:59.14px;top:1422.62px;font-size:19.62px;line-height:19.62px;font-weight:400;color:#8c8c8c;white-space:nowrap;letter-spacing:0.000px;transform:scaleX(0.8784);transform-origin:0 0;">Chats</div>
<div id="t73" style="position:absolute;left:224.15px;top:1422.62px;font-size:19.62px;line-height:19.62px;font-weight:400;color:#8c8c8c;white-space:nowrap;letter-spacing:0.000px;transform:scaleX(0.8684);transform-origin:0 0;">Channels</div>
<div id="t74" style="position:absolute;left:403.62px;top:1422.62px;font-size:19.62px;line-height:19.62px;font-weight:400;color:#8c8c8c;white-space:nowrap;letter-spacing:0.000px;transform:scaleX(0.8983);transform-origin:0 0;">Contacts</div>
<div style="position:absolute;left:1125px;top:486px;width:1456px;height:420px;background:#fff;border-radius:10px;box-shadow:0 6px 40px rgba(0,0,0,0.22);"></div>
<svg style="position:absolute;left:1111px;top:682px;" width="16" height="30" viewBox="0 0 16 30"><polygon points="2,14 16,1 16,29" fill="#fff"/></svg>
<div id="t75" style="position:absolute;left:1159.04px;top:534.62px;font-size:31.98px;line-height:31.98px;font-weight:700;color:#111111;white-space:nowrap;letter-spacing:0.561px;">Steve Marcus(+1 888-720-9500)</div>
<svg style="position:absolute;left:2519px;top:534px;" width="32" height="32" viewBox="0 0 32 32"><path d="M3,3 L29,29 M29,3 L3,29" stroke="#777" stroke-width="3.2" fill="none"/></svg>
<div style="position:absolute;left:1153px;top:616px;width:280px;height:44px;border:2px solid #5aa7b0;border-radius:5px;box-sizing:border-box;background:#fff;"></div>
<div style="position:absolute;left:1153px;top:616px;width:138px;height:44px;background:#5aa7b0;border-radius:5px 0 0 5px;"></div>
<div id="t76" style="position:absolute;left:1172.79px;top:625.44px;font-size:26.89px;line-height:26.89px;font-weight:400;color:#ffffff;white-space:nowrap;letter-spacing:-0.360px;">Secured</div>
<div id="t77" style="position:absolute;left:1301.85px;top:625.44px;font-size:26.89px;line-height:26.89px;font-weight:400;color:#111111;white-space:nowrap;letter-spacing:0.147px;">Plain Text</div>
<div id="t78" style="position:absolute;left:1452.67px;top:606.69px;font-size:29.07px;line-height:29.07px;font-weight:400;color:#111111;white-space:nowrap;letter-spacing:-0.147px;">Message will be sent as secured link. Patients can view it after OTP and</div>
<div id="t79" style="position:absolute;left:1452.67px;top:643.19px;font-size:29.07px;line-height:29.07px;font-weight:400;color:#111111;white-space:nowrap;letter-spacing:0.000px;">DOB verification.</div>
<div style="position:absolute;left:1153px;top:690px;width:1404px;height:124px;border:2px solid #6b6b6b;border-radius:15px;box-sizing:border-box;"></div>
<div id="t80" style="position:absolute;left:1170.89px;top:718.93px;font-size:27.62px;line-height:27.62px;font-weight:400;color:#9b9b9b;white-space:nowrap;letter-spacing:0.000px;transform:scaleX(0.8920);transform-origin:0 0;">Send a secure message to patient</div>
<div style="position:absolute;left:2415px;top:724px;width:124px;height:56px;border:2px solid #d69a3a;border-radius:11px;box-sizing:border-box;"></div>
<div id="t81" style="position:absolute;left:2429.28px;top:738.20px;font-size:29.65px;line-height:29.65px;font-weight:400;color:#d6943a;white-space:nowrap;letter-spacing:0.000px;transform:scaleX(0.9173);transform-origin:0 0;">Send</div>
<svg style="position:absolute;left:2620px;top:1376px;" width="82" height="60" viewBox="2620 1376 82 60"><path d="M2636.5,1394 C2638.5,1392.5 2642,1393 2644.5,1395.5 C2645.5,1397 2645.5,1400 2644.5,1403 L2643,1405.5 C2642,1406.5 2640.5,1406.8 2639.5,1407 C2640,1412 2642,1416 2645,1419.5 C2646,1418.8 2647.5,1418 2648.5,1418.5 L2653,1422 C2654.8,1423.5 2655,1425.5 2654,1428 L2652.5,1430.5 C2651.5,1432 2649.5,1432.5 2647.5,1431.5 C2640,1427 2634,1419 2633,1408 C2632.5,1402 2633.5,1396.5 2636.5,1394 Z" fill="#000"/><g fill="#000"><circle cx="2652.9" cy="1398.8" r="2.35"/><circle cx="2659.2" cy="1398.8" r="2.35"/><circle cx="2665.5" cy="1398.8" r="2.35"/><circle cx="2652.9" cy="1405.2" r="2.35"/><circle cx="2659.2" cy="1405.2" r="2.35"/><circle cx="2665.5" cy="1405.2" r="2.35"/><circle cx="2652.9" cy="1411.6" r="2.35"/><circle cx="2659.2" cy="1411.6" r="2.35"/><circle cx="2665.5" cy="1411.6" r="2.35"/><circle cx="2659.2" cy="1417.7" r="2.35"/></g></svg>
<svg style="position:absolute;left:60px;top:1390px;" width="40" height="35" viewBox="60 1390 40 35"><ellipse cx="76.5" cy="1409.5" rx="8.8" ry="7.8" fill="#8c8c8c"/><polygon points="70,1413 67.5,1420.5 76,1416" fill="#8c8c8c"/><ellipse cx="83.3" cy="1404.8" rx="12.3" ry="9.6" fill="#8c8c8c" stroke="#e1e1e1" stroke-width="1.6"/><polygon points="86,1412.5 94,1418 90.5,1410" fill="#8c8c8c"/></svg>
<svg style="position:absolute;left:245px;top:1393px;" width="31" height="28" viewBox="0 0 31 28"><g fill="#8c8c8c"><circle cx="15.5" cy="10" r="5.5"/><path d="M6,27 C6,19 10,16 15.5,16 C21,16 25,19 25,27 Z"/><circle cx="6" cy="6" r="3.5"/><circle cx="25" cy="6" r="3.5"/><path d="M1,18 C1,13 3,11 6,11 C8,11 9.5,12 10,13 C8,15 7,17 7,20 H1 Z"/><path d="M30,18 C30,13 28,11 25,11 C23,11 21.5,12 21,13 C23,15 24,17 24,20 H30 Z"/></g></svg>
<svg style="position:absolute;left:424px;top:1393px;" width="30" height="28" viewBox="0 0 30 28"><g fill="#8c8c8c"><circle cx="15" cy="8.5" r="6.5"/><path d="M4,26 C4,18 8,15.5 15,15.5 C22,15.5 26,18 26,26 Z"/></g></svg>
<svg style="position:absolute;left:2490px;top:735px;" width="40" height="30" viewBox="2490 735 40 30"><g fill="none" stroke="#d6943a" stroke-width="1.3" stroke-linejoin="round"><path d="M2496,748.8 L2523.7,740.6 L2510.5,760.7 L2505,755.5"/><path d="M2496,748.8 L2501.3,752.8 L2523.7,740.6 M2501.3,752.8 V759.7 L2505,755.5 L2523.7,740.6"/></g></svg>
<svg style="position:absolute;left:0px;top:1410px;" width="20" height="26" viewBox="0 0 20 26"><path d="M0,8 Q1,22 12,26 H0 Z" fill="#1a1a1a"/></svg>
<svg style="position:absolute;left:2682px;top:1416px;" width="20" height="20" viewBox="0 0 20 20"><path d="M20,0 A20,20 0 0 1 0,20 H20 Z" fill="#444"/></svg>
</body></html>
